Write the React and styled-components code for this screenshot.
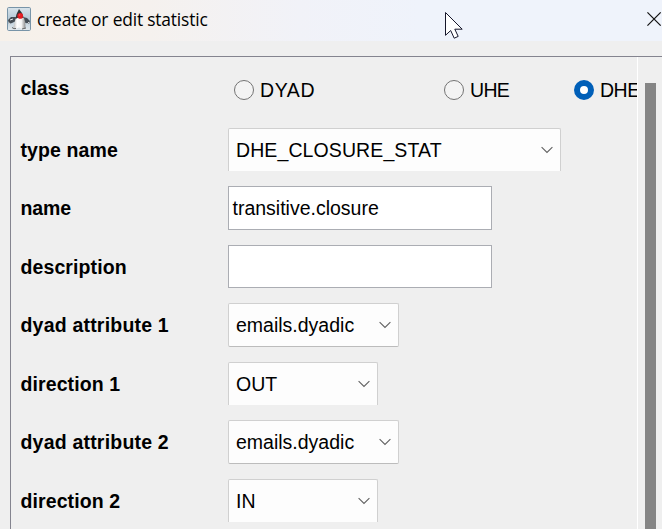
import React from "react";
import styled, { createGlobalStyle } from "styled-components";

const GlobalStyle = createGlobalStyle`
  * { box-sizing: border-box; }
  body {
    margin: 0;
    overflow: hidden;
    background: #efefef;
    color: #000;
    font: 19.5px/22px "Liberation Sans", Arial, sans-serif;
  }
`;

const Dialog = styled.main`
  display: flex;
  flex-direction: column;
  width: 662px;
  height: 529px;
  overflow: hidden;
  position: relative;
`;

const TitleBar = styled.header`
  display: flex;
  align-items: center;
  flex: 0 0 41px;
  padding: 0 0 4px 7px;
  background: linear-gradient(90deg, #f7f1ea 0, #f5f1ee 150px, #f1f2f8 300px, #eff3fb 420px, #eff3fb 100%);
`;

const Title = styled.h1`
  margin: 0 auto 0 6px;
  font: 400 17.4px/24px "Open Sans", "Segoe UI", sans-serif;
  letter-spacing: -0.18px;
  white-space: nowrap;
`;

const CloseButton = styled.button`
  display: flex;
  flex: 0 0 15px;
  width: 15px;
  padding: 0;
  border: 0;
  background: none;
  overflow: hidden;
`;

const Cursor = styled.svg`
  position: absolute;
  left: 444px;
  top: 11px;
`;

const ScrollPane = styled.section`
  display: flex;
  flex: 1;
  margin: 15px 0 0 10px;
  border: solid #84848f;
  border-width: 1px 0 0 1px;
  min-height: 0;
`;

const Form = styled.form`
  display: grid;
  grid-template-columns: 208px 409px;
  grid-template-rows: 71px 58px 59px 58px 59px 58px 59px 58px;
  align-content: start;
  flex: 0 0 626px;
  padding-left: 9px;
  overflow: hidden;
`;

const Label = styled.label`
  font-weight: 700;
  letter-spacing: ${(p) => p.$tracking ?? 0.1}px;
  padding: ${(p) => p.$top ?? 11}px 0 0 0.5px;
  white-space: nowrap;
`;

const RadioGroup = styled.div`
  display: flex;
  padding: 22px 0 0 6px;
`;

const RadioOption = styled.label`
  display: flex;
  align-items: center;
  flex: 0 0 ${(p) => p.$width}px;
  height: 22px;
  gap: 6px;
  letter-spacing: ${(p) => p.$tracking}px;
  white-space: nowrap;
`;

const RadioMark = styled.span`
  flex: 0 0 20px;
  height: 20px;
  border-radius: 50%;
  border: ${(p) => (p.$checked ? "6px solid #005fb8" : "1px solid #737373")};
  background: ${(p) => (p.$checked ? "#fff" : "#f3f3f3")};
`;

const Select = styled.div`
  display: flex;
  align-items: center;
  justify-content: space-between;
  width: ${(p) => p.$width}px;
  height: ${(p) => (p.$open ? 43 : 44)}px;
  padding: 0 7px;
  border: 1px solid #d0d0d0;
  border-bottom: ${(p) => (p.$open ? "0" : "1px solid #bcbcbc")};
  border-radius: ${(p) => (p.$open ? "2px 2px 0 0" : "2px")};
  background: #fdfdfd;
`;

const Field = styled.div`
  display: flex;
  align-items: center;
  width: 264px;
  height: ${(p) => p.$height}px;
  padding: 0 3.5px;
  border: 1px solid #abadb3;
  background: #fff;
`;

const Value = styled.span`
  height: 22px;
  letter-spacing: ${(p) => p.$tracking ?? 0}px;
  white-space: nowrap;
  margin-bottom: ${(p) => p.$lift ?? 0}px;
`;

const ScrollTrack = styled.div`
  flex: 1;
  border-left: 1px solid #fff;
  padding: 26px 0 0 7px;
`;

const ScrollThumb = styled.div`
  width: 11px;
  height: 100%;
  background: #858585;
`;

const Chevron = () => (
  <svg width="12" height="8" viewBox="0 0 12 8" fill="none" stroke="#606060" strokeWidth="1.1">
    <path d="M.6 1.1 6 6.4l5.4-5.3" />
  </svg>
);

const DukeIcon = () => (
  <svg width="24" height="24" viewBox="0 0 24 24">
    <defs>
      <linearGradient id="tile" x2="0" y2="1">
        <stop stopColor="#d9e4eb" />
        <stop offset=".5" stopColor="#b4c8d6" />
        <stop offset="1" stopColor="#e4eaee" />
      </linearGradient>
      <linearGradient id="belly" x2="1">
        <stop stopColor="#bbb" />
        <stop offset=".3" stopColor="#fff" />
        <stop offset=".65" stopColor="#f5f5f5" />
        <stop offset="1" stopColor="#888" />
      </linearGradient>
    </defs>
    <rect x=".5" y=".5" width="23" height="23" rx="1.2" fill="url(#tile)" stroke="#7894a8" />
    <path d="M9 10 4 10l-3 3 1 4 3-1 4-2M16 10l4 1 3 3-1 3-6-2" fill="#454d55" />
    <path d="M3 13l3-1M2 15.5 3 17M20.5 17l1.5-2" stroke="#e8eaec" />
    <path d="M9 10Q7.5 16 6.5 20q.5 2.3 3 1.5l2.5-1 3 1.5 3.5-1Q19 15 16.5 9.5Z" fill="url(#belly)" />
    <path d="M5 20.5q2 1.8 4 1M15 22l4-1" stroke="#666" fill="none" />
    <path d="M12 2Q9.5 6 8.3 12l3.5-1.5 5 .5Q16 6 12 2Z" fill="#333639" />
    <circle cx="13.2" cy="8.9" r="2.8" fill="#e51c23" />
    <circle cx="12.6" cy="8" r=".8" fill="#ff5650" />
  </svg>
);

const rows = [
  { label: "type name", kind: "select", value: "DHE_CLOSURE_STAT", width: 333, open: true, tracking: 0.1 },
  { label: "name", kind: "field", value: "transitive.closure", height: 44, labelTracking: -0.1 },
  { label: "description", kind: "field", value: "", height: 43 },
  { label: "dyad attribute 1", kind: "select", value: "emails.dyadic", width: 171, labelTracking: 0.2 },
  { label: "direction 1", kind: "select", value: "OUT", width: 150, open: true },
  { label: "dyad attribute 2", kind: "select", value: "emails.dyadic", width: 171, labelTracking: 0.2 },
  { label: "direction 2", kind: "select", value: "IN", width: 150, open: true },
];

const radios = [
  { label: "DYAD", width: 210, tracking: 0.6 },
  { label: "UHE", width: 130, tracking: -0.7 },
  { label: "DHE", width: 70, tracking: -0.5, checked: true },
];

export default function App() {
  return (
    <>
      <GlobalStyle />
      <Dialog>
        <TitleBar>
          <DukeIcon />
          <Title>create or edit statistic</Title>
          <CloseButton aria-label="Close">
            <svg width="17" height="16" viewBox="0 0 17 16" stroke="#111" strokeWidth="1.4">
              <path d="m.5.5 15 15m0-15-15 15" />
            </svg>
          </CloseButton>
        </TitleBar>
        <ScrollPane>
          <Form>
            <Label $top={20} $tracking={0}>class</Label>
            <RadioGroup>
              {radios.map((r) => (
                <RadioOption key={r.label} $width={r.width} $tracking={r.tracking}>
                  <RadioMark $checked={r.checked} />
                  {r.label}
                </RadioOption>
              ))}
            </RadioGroup>
            {rows.map((r) => (
              <React.Fragment key={r.label}>
                <Label $tracking={r.labelTracking}>{r.label}</Label>
                {r.kind === "select" ? (
                  <Select $width={r.width} $open={r.open}>
                    <Value $tracking={r.tracking} $lift={r.open ? 1 : 0}>{r.value}</Value>
                    <Chevron />
                  </Select>
                ) : (
                  <Field $height={r.height}>
                    <Value>{r.value}</Value>
                  </Field>
                )}
              </React.Fragment>
            ))}
          </Form>
          <ScrollTrack>
            <ScrollThumb />
          </ScrollTrack>
        </ScrollPane>
        <Cursor width="20" height="29" viewBox="0 0 20 29">
          <path d="M1.5 1.5v22.8l5.2-4.8 3.5 7.7 4-1.8-3.4-7.2h7.4Z" fill="#fff" stroke="#16162a" strokeWidth="1" />
        </Cursor>
      </Dialog>
    </>
  );
}
